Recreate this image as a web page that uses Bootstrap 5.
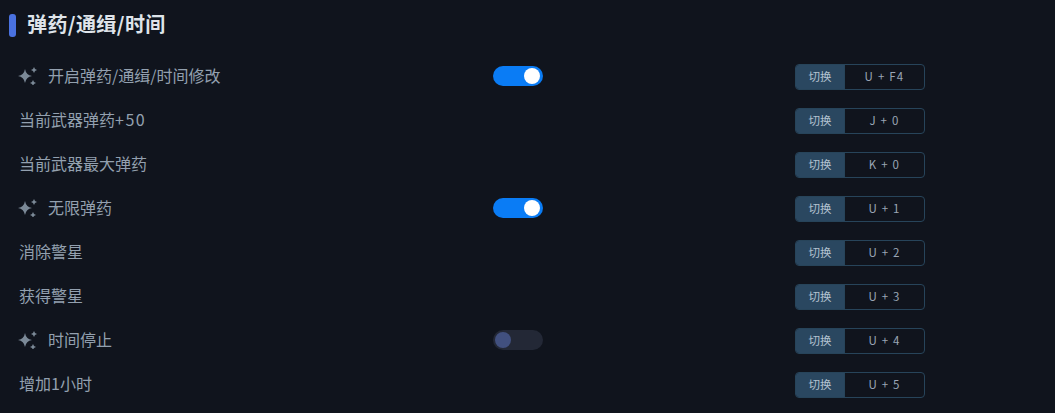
<!DOCTYPE html>
<html lang="zh">
<head>
<meta charset="utf-8">
<title>弹药/通缉/时间</title>
<link href="https://cdn.jsdelivr.net/npm/bootstrap@5.3.0/dist/css/bootstrap.min.css" rel="stylesheet">
<style>
html,body{height:413px;overflow:hidden}
body{background:#10141d;font-family:"Noto Sans CJK SC","Liberation Sans",sans-serif;color:#93a0af}
.sheet{padding:9px 0 0 9px}
.heading{height:32px;font-size:20px;font-weight:700;color:#dfe4ea;line-height:32px;margin:0 0 13px;letter-spacing:.4px;padding-bottom:2px}
.heading-bar{width:7px;height:23px;border-radius:3px;background:#4a72e0;margin-right:11px;margin-top:2px}
.opt-row{height:44px;padding-left:10px;font-size:16px;line-height:20px}
.opt-label{width:474px;padding-bottom:2px}
.opt-toggle{width:302px}
.wide-run{letter-spacing:1.5px}
.spark{width:20px;height:20px;margin:0 10px 0 -1px;fill:#7b8997}
.track{width:50px;height:20px;border-radius:10px;background:#0a7cf5;padding:0 3px}
.knob{width:16px;height:16px;border-radius:50%;background:#fff}
.track-off{background:#232836;padding:0 2px}
.track-off .knob{background:#41507f}
.hotkey{width:130px;height:26px;border:1px solid #27445a;border-radius:4px;font-size:11.5px;overflow:hidden;margin-top:1px}
.hotkey-tag{width:49px;background:#2a4760;color:#b3c2d0;border-right:1px solid #27445a;padding-bottom:2px}
.hotkey-val{color:#9aa6b5;letter-spacing:1.2px;padding-bottom:2px}
</style>
</head>
<body>
<main class="sheet">
  <h1 class="heading d-flex align-items-center"><span class="heading-bar"></span>弹药/通缉/时间</h1>

  <div class="opt-row d-flex align-items-center">
    <div class="opt-label d-flex align-items-center"><svg class="spark" viewBox="0 0 20 20"><path d="M7 4Q8 10 14 11 8 12 7 18 6 12 0 11 6 10 7 4Z"/><path d="M16 2Q16.500 4.500 19 5 16.500 5.500 16 8 15.500 5.500 13 5 15.500 4.500 16 2Z"/><path d="M15 15Q15.500 17.500 18 18 15.500 18.500 15 21 14.500 18.500 12 18 14.500 17.500 15 15Z"/></svg>开启弹药/通缉/时间修改</div>
    <div class="opt-toggle"><div class="track d-flex align-items-center justify-content-end"><span class="knob"></span></div></div>
    <div class="hotkey d-flex"><span class="hotkey-tag d-flex align-items-center justify-content-center">切换</span><span class="hotkey-val flex-grow-1 d-flex align-items-center justify-content-center">U + F4</span></div>
  </div>

  <div class="opt-row d-flex align-items-center">
    <div class="opt-label">当前武器弹药<span class="wide-run">+50</span></div>
    <div class="opt-toggle"></div>
    <div class="hotkey d-flex"><span class="hotkey-tag d-flex align-items-center justify-content-center">切换</span><span class="hotkey-val flex-grow-1 d-flex align-items-center justify-content-center">J + 0</span></div>
  </div>

  <div class="opt-row d-flex align-items-center">
    <div class="opt-label">当前武器最大弹药</div>
    <div class="opt-toggle"></div>
    <div class="hotkey d-flex"><span class="hotkey-tag d-flex align-items-center justify-content-center">切换</span><span class="hotkey-val flex-grow-1 d-flex align-items-center justify-content-center">K + 0</span></div>
  </div>

  <div class="opt-row d-flex align-items-center">
    <div class="opt-label d-flex align-items-center"><svg class="spark" viewBox="0 0 20 20"><path d="M7 4Q8 10 14 11 8 12 7 18 6 12 0 11 6 10 7 4Z"/><path d="M16 2Q16.500 4.500 19 5 16.500 5.500 16 8 15.500 5.500 13 5 15.500 4.500 16 2Z"/><path d="M15 15Q15.500 17.500 18 18 15.500 18.500 15 21 14.500 18.500 12 18 14.500 17.500 15 15Z"/></svg>无限弹药</div>
    <div class="opt-toggle"><div class="track d-flex align-items-center justify-content-end"><span class="knob"></span></div></div>
    <div class="hotkey d-flex"><span class="hotkey-tag d-flex align-items-center justify-content-center">切换</span><span class="hotkey-val flex-grow-1 d-flex align-items-center justify-content-center">U + 1</span></div>
  </div>

  <div class="opt-row d-flex align-items-center">
    <div class="opt-label">消除警星</div>
    <div class="opt-toggle"></div>
    <div class="hotkey d-flex"><span class="hotkey-tag d-flex align-items-center justify-content-center">切换</span><span class="hotkey-val flex-grow-1 d-flex align-items-center justify-content-center">U + 2</span></div>
  </div>

  <div class="opt-row d-flex align-items-center">
    <div class="opt-label">获得警星</div>
    <div class="opt-toggle"></div>
    <div class="hotkey d-flex"><span class="hotkey-tag d-flex align-items-center justify-content-center">切换</span><span class="hotkey-val flex-grow-1 d-flex align-items-center justify-content-center">U + 3</span></div>
  </div>

  <div class="opt-row d-flex align-items-center">
    <div class="opt-label d-flex align-items-center"><svg class="spark" viewBox="0 0 20 20"><path d="M7 4Q8 10 14 11 8 12 7 18 6 12 0 11 6 10 7 4Z"/><path d="M16 2Q16.500 4.500 19 5 16.500 5.500 16 8 15.500 5.500 13 5 15.500 4.500 16 2Z"/><path d="M15 15Q15.500 17.500 18 18 15.500 18.500 15 21 14.500 18.500 12 18 14.500 17.500 15 15Z"/></svg>时间停止</div>
    <div class="opt-toggle"><div class="track track-off d-flex align-items-center"><span class="knob"></span></div></div>
    <div class="hotkey d-flex"><span class="hotkey-tag d-flex align-items-center justify-content-center">切换</span><span class="hotkey-val flex-grow-1 d-flex align-items-center justify-content-center">U + 4</span></div>
  </div>

  <div class="opt-row d-flex align-items-center">
    <div class="opt-label">增加1小时</div>
    <div class="opt-toggle"></div>
    <div class="hotkey d-flex"><span class="hotkey-tag d-flex align-items-center justify-content-center">切换</span><span class="hotkey-val flex-grow-1 d-flex align-items-center justify-content-center">U + 5</span></div>
  </div>
</main>
<script src="https://cdn.jsdelivr.net/npm/bootstrap@5.3.0/dist/js/bootstrap.bundle.min.js"></script>
</body>
</html>
